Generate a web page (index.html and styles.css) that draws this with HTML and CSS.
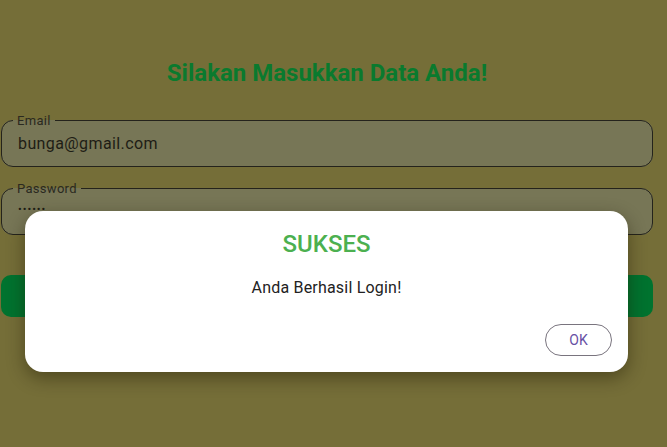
FILE: index.html
```html
<!DOCTYPE html>
<html>
<head>
<meta charset="utf-8">
<link rel="stylesheet" href="styles.css">
</head>
<body>
<div class="app">
  <h1 class="title">Silakan Masukkan Data Anda!</h1>
  <form class="form">
    <fieldset class="field">
      <legend class="label">Email</legend>
      <div class="value">bunga@gmail.com</div>
    </fieldset>
    <fieldset class="field">
      <legend class="label">Password</legend>
      <div class="value dots">••••••</div>
    </fieldset>
    <div class="button"></div>
  </form>
  <div class="dialog">
    <div class="dialog-title">SUKSES</div>
    <div class="dialog-body">Anda Berhasil Login!</div>
    <div class="dialog-actions"><span class="ok">OK</span></div>
  </div>
</div>
</body>
</html>
```
FILE: styles.css
```css
* { box-sizing: border-box; }
html, body { margin: 0; height: 100%; }
body {
  background: #756e38;
  font-family: Roboto, "Noto Sans", sans-serif;
  color: #1d1b16;
}
.app {
  position: relative;
  width: 653px;
  height: 447px;
  padding: 58px 0 0 1px;
}
.title {
  margin: 0;
  text-align: center;
  font-size: 24px;
  line-height: 30px;
  font-weight: 700;
  color: #0a7a2e;
}
.form {
  display: flex;
  flex-direction: column;
  margin-top: 25px;
}
.field {
  margin: 0 0 14px;
  padding: 0 16px;
  border: 1px solid #24231c;
  border-radius: 12px;
  background: #777656;
  height: 54px;
}
.label {
  padding: 0 4px;
  margin-left: -5px;
  font-size: 13px;
  line-height: 15px;
  letter-spacing: 0.3px;
  color: #2a2920;
}
.value {
  font-size: 16px;
  line-height: 20px;
  letter-spacing: 0.4px;
  margin-top: 6px;
  color: #1e1d15;
}
.dots { font-size: 11px; letter-spacing: 1px; margin-top: 4px; }
.button {
  margin-top: 26px;
  height: 42px;
  border-radius: 10px;
  background: #00732f;
}
.dialog {
  position: absolute;
  left: 25px;
  top: 211px;
  width: 603px;
  height: 161px;
  background: #fff;
  border-radius: 18px;
  box-shadow: 0 6px 18px rgba(30, 25, 0, 0.45);
  display: flex;
  flex-direction: column;
  align-items: center;
  padding: 19px 16px 16px;
}
.dialog-title {
  font-size: 24px;
  line-height: 28px;
  font-weight: 500;
  color: #4cb050;
}
.dialog-body {
  margin-top: 20px;
  font-size: 16px;
  line-height: 20px;
  letter-spacing: 0.2px;
  color: #222;
}
.dialog-actions {
  margin-top: auto;
  align-self: stretch;
  display: flex;
  justify-content: flex-end;
}
.ok {
  width: 67px;
  height: 32px;
  border: 1px solid #79747e;
  border-radius: 16px;
  display: flex;
  align-items: center;
  justify-content: center;
  font-size: 14px;
  font-weight: 400;
  color: #6750a4;
}
```
